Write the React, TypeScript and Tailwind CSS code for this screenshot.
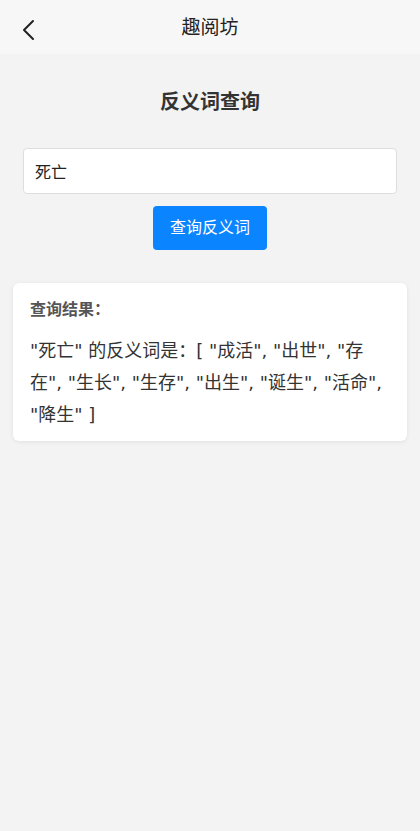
import React from 'react';

const font = { fontFamily: '"DejaVu Sans", "Noto Sans CJK SC", sans-serif' };

const antonyms = ['成活', '出世', '存在', '生长', '生存', '出生', '诞生', '活命', '降生'];

export default function App() {
  const word = '死亡';
  const result = `"${word}" 的反义词是：[ ${antonyms.map((a) => `"${a}"`).join(', ')} ]`;

  return (
    <div className="min-h-[831px] w-[420px] bg-[#f3f3f3] text-[#333]" style={font}>
      <div className="relative flex h-[54px] items-center justify-center bg-[#f7f7f7]">
        <button className="absolute left-[16px] top-[14px] p-1">
          <svg width="20" height="24" viewBox="0 0 20 24" fill="none">
            <path d="M13 3 L4 12 L13 21" stroke="#222" strokeWidth="2" strokeLinecap="round" strokeLinejoin="round" />
          </svg>
        </button>
        <h1 className="text-[19px] text-[#222]">趣阅坊</h1>
      </div>

      <div className="flex flex-col items-center px-[23px]">
        <h2 className="mt-[33px] text-[20px] font-bold text-[#333]">反义词查询</h2>
        <input
          defaultValue={word}
          className="mt-[31px] h-[46px] w-full rounded-[4px] border border-[#dedede] bg-white px-[11px] text-[16px] text-[#222] outline-none"
        />
        <button className="mt-[12px] h-[44px] w-[114px] rounded-[4px] bg-[#0a84ff] text-[16px] text-white">
          查询反义词
        </button>
      </div>

      <div className="mx-[13px] mt-[33px] rounded-[6px] bg-white px-[17px] pb-[10px] pt-[17px] shadow-[0_1px_4px_rgba(0,0,0,0.08)]">
        <p className="text-[16px] font-bold leading-[20px] text-[#555]">查询结果：</p>
        <p className="mt-[15px] text-[18px] leading-[32px] text-[#333]">{result}</p>
      </div>
    </div>
  );
}
